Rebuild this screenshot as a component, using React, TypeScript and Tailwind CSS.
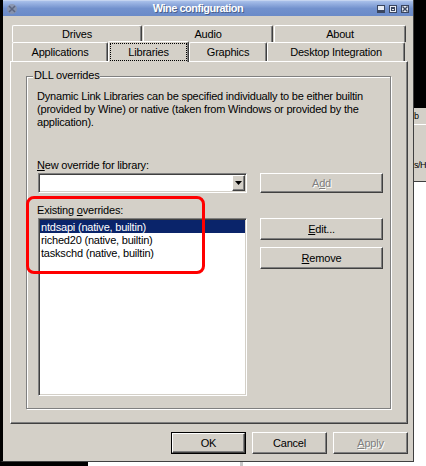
import React from 'react';

// classic win9x style bevels
const raised =
  'bg-[#d4d0c8] border border-t-white border-l-white border-r-[#404040] border-b-[#404040] shadow-[inset_-1px_-1px_0_#808080]';
const sunken =
  'border border-t-[#808080] border-l-[#808080] border-r-white border-b-white shadow-[inset_1px_1px_0_#404040,inset_-1px_-1px_0_#d4d0c8]';

const Btn: React.FC<{ children: React.ReactNode; className?: string; disabled?: boolean }> = ({
  children,
  className = '',
  disabled,
}) => (
  <div
    className={`${raised} flex items-center justify-center ${
      disabled ? 'text-[#808080] [text-shadow:1px_1px_0_#fff]' : 'text-black'
    } ${className}`}
  >
    {children}
  </div>
);

const Tab: React.FC<{ label: string; w: string; selected?: boolean }> = ({ label, w, selected }) => {
  if (selected) {
    return (
      <div
        className={`${w} h-[21px] -mb-[1px] relative z-10 bg-[#d4d0c8] border-t border-l border-r border-t-white border-l-white border-r-[#404040] rounded-t-[2px] shadow-[inset_-1px_0_0_#808080] flex items-start justify-center pt-[1px]`}
      >
        <span className="h-[18px] w-[77px] border border-dotted border-black flex items-center justify-center leading-none">
          {label}
        </span>
      </div>
    );
  }
  return (
    <div
      className={`${w} h-full bg-[#d4d0c8] border-t border-l border-r border-t-white border-l-white border-r-[#404040] rounded-t-[2px] shadow-[inset_-1px_0_0_#808080] flex items-center justify-center leading-none`}
    >
      {label}
    </div>
  );
};

const overrides = ['ntdsapi (native, builtin)', 'riched20 (native, builtin)', 'taskschd (native, builtin)'];

export default function App() {
  return (
    <div className="relative w-[426px] h-[466px] flex bg-white overflow-hidden font-['Liberation_Sans',sans-serif] text-[11px] tracking-[-0.2px] text-black">
      {/* window + bottom strip */}
      <div className="w-[414px] flex flex-col">
        <div className="h-[462px] flex flex-col bg-[#d4d0c8] border-l-[3px] border-l-black border-r border-b border-r-[#404040] border-b-[#404040]">
          {/* title bar */}
          <div className="h-[16px] flex items-center bg-gradient-to-b from-[#a9c0ea] via-[#7291cd] to-[#6a8ac8] border-t border-t-[#c4d4f0]">
            <div className="w-[15px] h-[14px] ml-[1px] flex items-center justify-center">
              <svg width="12" height="12" viewBox="0 0 12 12">
                <circle cx="6" cy="6" r="5" fill="#8b93a8" opacity="0.8" />
                <path d="M3 3 L9 9 M9 3 L3 9" stroke="#5b6580" strokeWidth="1.5" />
              </svg>
            </div>
            <div className="flex-1 text-center text-white font-bold text-[11px] tracking-[-0.5px] [text-shadow:1px_1px_0_#4a5f8a] leading-none -mt-[1px]">
              Wine configuration
            </div>
            <div className="flex gap-[4px] mr-[4px]">
              <div className="w-[8px] h-[8px] bg-[#e8ecf4] border border-[#3a4660] flex items-end justify-center">
                <div className="w-[6px] h-[2px] bg-[#3a4660]" />
              </div>
              <div className="w-[8px] h-[8px] bg-[#e8ecf4] border border-[#3a4660] p-[1px]">
                <div className="w-full h-full border border-t-2 border-[#3a4660]" />
              </div>
              <div className="w-[8px] h-[8px] bg-[#e8ecf4] border border-[#3a4660] flex items-center justify-center">
                <svg width="6" height="6" viewBox="0 0 6 6">
                  <path d="M0.5 0.5 L5.5 5.5 M5.5 0.5 L0.5 5.5" stroke="#3a4660" strokeWidth="1.4" />
                </svg>
              </div>
            </div>
          </div>

          {/* body */}
          <div className="flex-1 flex flex-col pl-[7px] pr-[5px] pt-[9px]">
            {/* tabs */}
            <div className="h-[17px] flex gap-[1px] pl-[2px]">
              <Tab label="Drives" w="w-[130px]" />
              <Tab label="Audio" w="w-[130px]" />
              <Tab label="About" w="w-[132px]" />
            </div>
            <div className="h-[19px] flex items-end pl-[2px]">
              <Tab label="Applications" w="w-[96px]" />
              <Tab label="Libraries" w="w-[81px]" selected />
              <Tab label="Graphics" w="w-[78px]" />
              <Tab label="Desktop Integration" w="w-[138px]" />
            </div>

            {/* panel */}
            <div className="h-[363px] border border-t-white border-l-white border-r-[#404040] border-b-[#404040] shadow-[inset_-1px_-1px_0_#808080] pt-[14px] pl-[15px]">
              {/* group box */}
              <div className="relative w-[365px] h-[333px] border border-[#808080] shadow-[inset_1px_1px_0_#fff,1px_1px_0_#fff]">
                <span className="absolute left-[6px] -top-[8px] bg-[#d4d0c8] px-[1px] leading-[13px]">DLL overrides</span>
                <div className="pl-[10px] pt-[13px]">
                  <p className="leading-[13px]">
                    Dynamic Link Libraries can be specified individually to be either builtin
                    <br />
                    (provided by Wine) or native (taken from Windows or provided by the
                    <br />
                    application).
                  </p>
                  <div className="mt-[30px] leading-[13px]">
                    <u className="underline-offset-1">N</u>ew override for library:
                  </div>
                  <div className="mt-[1px] flex gap-[13px] pl-[1px]">
                    <div className={`${sunken} w-[209px] h-[20px] bg-white flex justify-end items-center pr-[1px]`}>
                      <div className={`${raised} w-[13px] h-[16px] flex items-center justify-center`}>
                        <svg width="7" height="4" viewBox="0 0 7 4">
                          <path d="M0 0 H7 L3.5 4 Z" fill="#000" />
                        </svg>
                      </div>
                    </div>
                    <Btn disabled className="w-[123px] h-[20px]">
                      A<u className="underline-offset-1">d</u>d
                    </Btn>
                  </div>
                  <div className="mt-[11px] leading-[13px]">
                    Existing <u className="underline-offset-1">o</u>verrides:
                  </div>
                  <div className="mt-[1px] flex gap-[13px] pl-[1px]">
                    <div className={`${sunken} w-[209px] h-[178px] bg-white p-[1px]`}>
                      {overrides.map((o, i) => (
                        <div
                          key={o}
                          className={`h-[13px] leading-[14px] pl-[1px] ${i === 0 ? 'bg-[#0a246a] text-white' : ''}`}
                        >
                          {o}
                        </div>
                      ))}
                    </div>
                    <div className="flex flex-col gap-[7px]">
                      <Btn className="w-[123px] h-[22px]">
                        <span>
                          <u className="underline-offset-1">E</u>dit...
                        </span>
                      </Btn>
                      <Btn className="w-[123px] h-[22px]">
                        <span>
                          <u className="underline-offset-1">R</u>emove
                        </span>
                      </Btn>
                    </div>
                  </div>
                </div>
              </div>
            </div>

            {/* dialog buttons */}
            <div className="mt-[8px] flex justify-end gap-[6px]">
              <div className="w-[75px] h-[22px] border border-black">
                <Btn className="w-full h-full">OK</Btn>
              </div>
              <Btn className="w-[75px] h-[22px]">Cancel</Btn>
              <Btn disabled className="w-[75px] h-[22px]">
                <span>
                  <u className="underline-offset-1">A</u>pply
                </span>
              </Btn>
            </div>
          </div>
        </div>
        {/* what shows below the window */}
        <div className="flex-1 flex">
          <div className="w-[88px] bg-black" />
          <div className="w-[152px] bg-white" />
          <div className="w-[3px] bg-[#c8c8c8]" />
          <div className="flex-1 bg-white" />
        </div>
      </div>

      {/* strip of desktop to the right */}
      <div className="flex-1 flex flex-col overflow-hidden">
        <div className="h-[108px] bg-black" />
        <div className="h-[16px] bg-[#d4d0c8] text-[9px] leading-[16px] whitespace-nowrap">b</div>
        <div className="h-[57px] bg-[#d4d0c8] border-t border-white flex flex-col justify-end pb-[10px] leading-[12px] text-[9px] tracking-[-0.5px]">
          s/H
        </div>
        <div className="flex-1 bg-white border-t border-[#404040]" />
      </div>

      {/* annotation */}
      <div className="absolute left-[26px] top-[196px] w-[179px] h-[78px] border-[3px] border-[#ff0000] rounded-[8px]" />
    </div>
  );
}
